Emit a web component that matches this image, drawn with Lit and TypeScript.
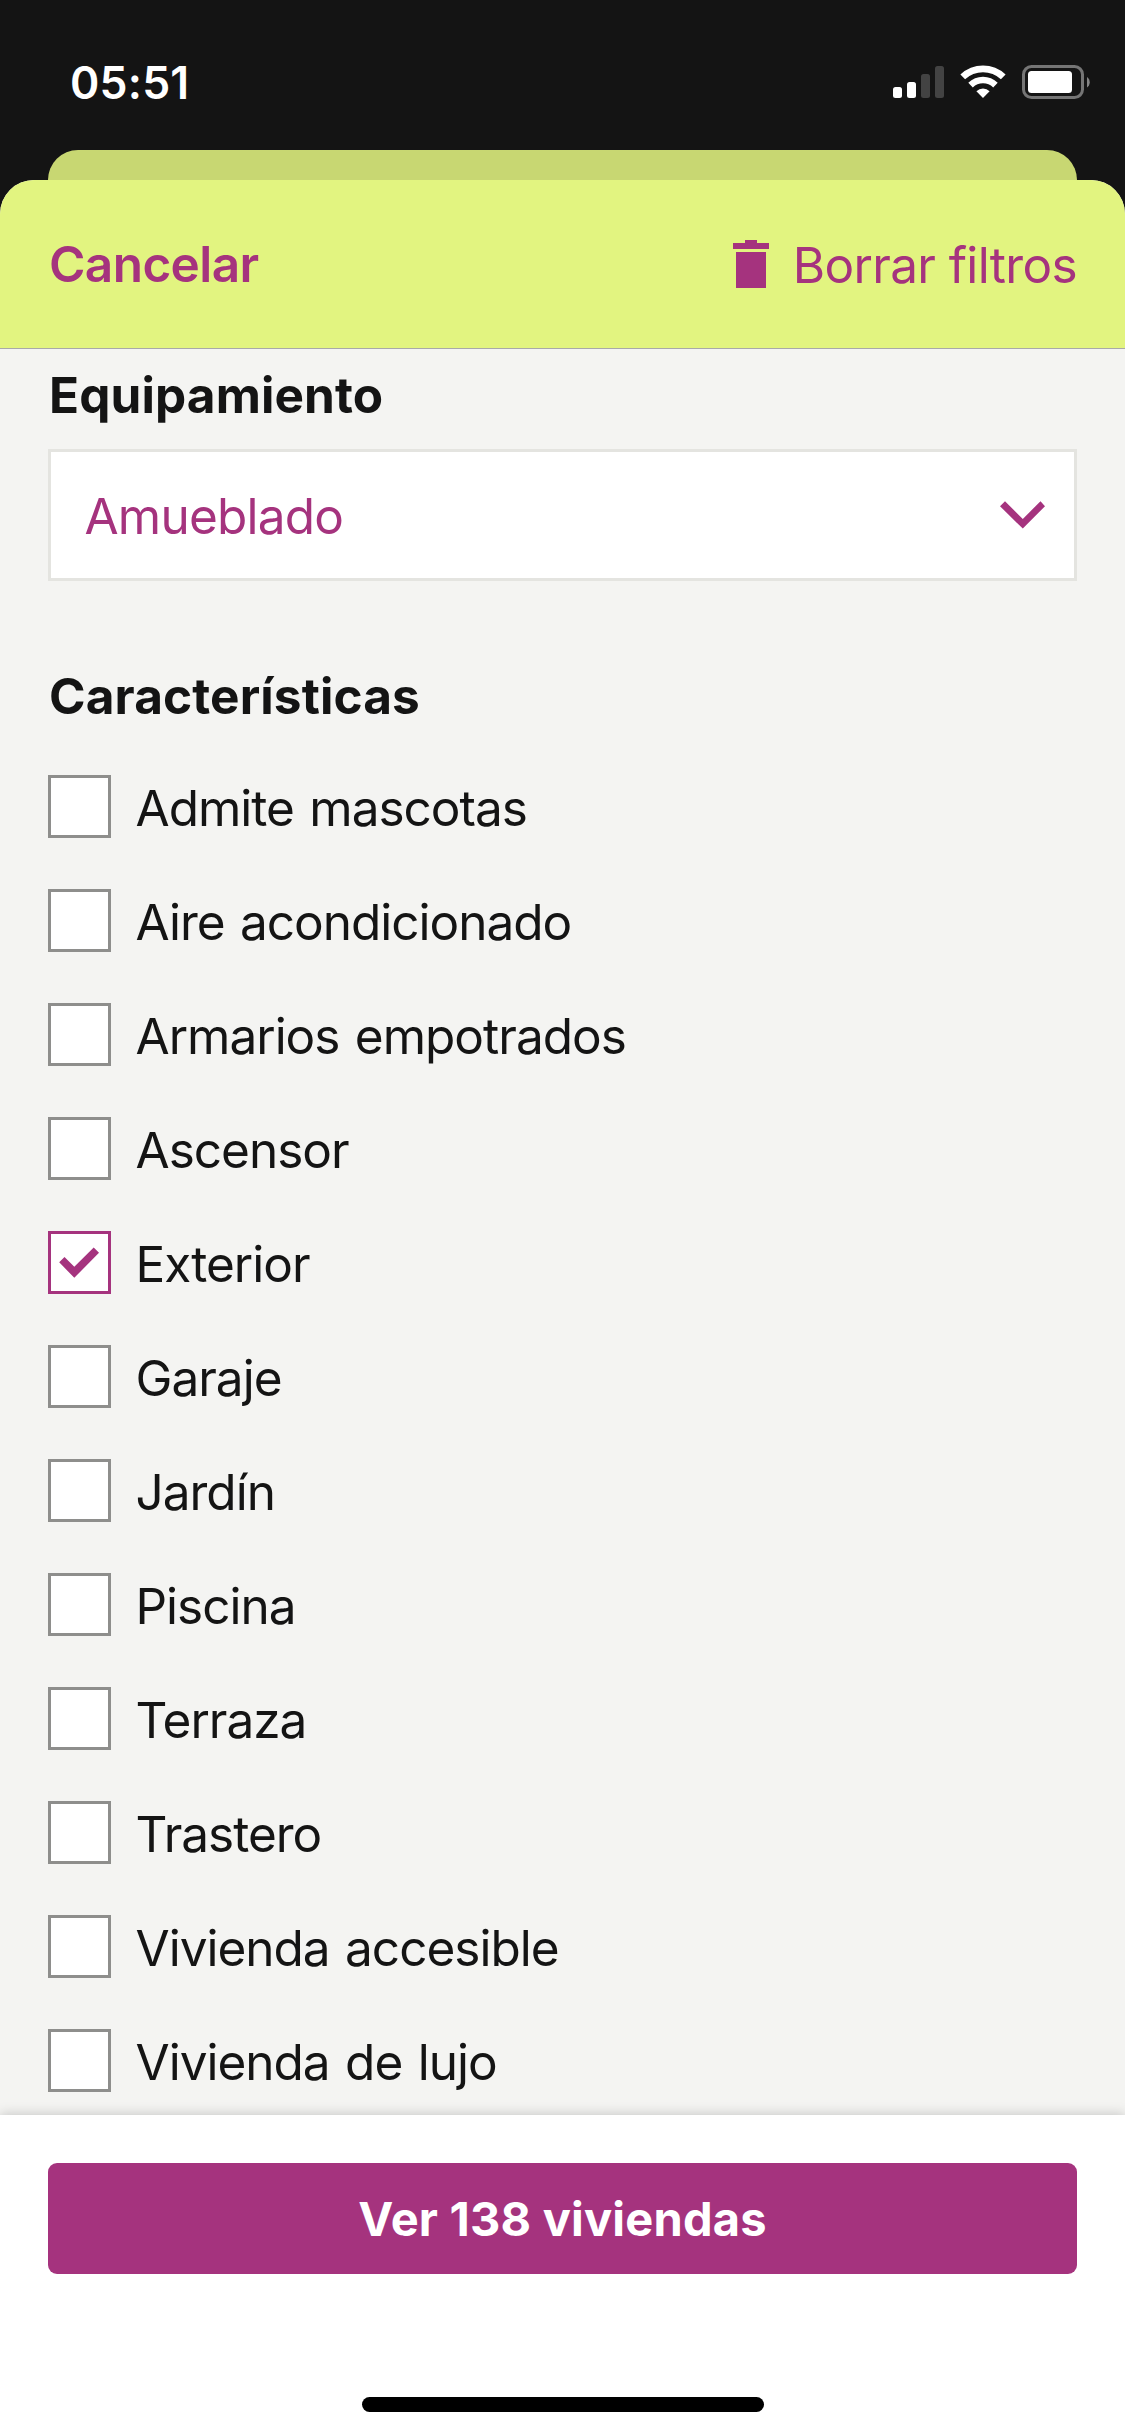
import { LitElement, html, svg, css, nothing } from "lit";
import { customElement, property, state } from "lit/decorators.js";

interface Feature {
  label: string;
  checked: boolean;
}

@customElement("status-bar")
export class StatusBar extends LitElement {
  static styles = css`
    :host {
      display: flex;
      justify-content: space-between;
      align-items: center;
      box-sizing: border-box;
      height: 150px;
      padding: 14px 33px 0 70px;
      color: #fff;
    }
    .time {
      font-size: 44.5px;
      font-weight: 600;
      line-height: 60px;
      letter-spacing: 0.2px;
      padding-top: 1px;
    }
    .icons {
      display: block;
      width: 200px;
      height: 34px;
    }
  `;

  render() {
    return html`
      <span class="time">05:51</span>
      <svg class="icons" viewBox="0 0 200 34" fill="#fff">
        <rect x="1" y="22" width="9" height="11" rx="2.5" />
        <rect x="15" y="17" width="9" height="16" rx="2.5" />
        <rect x="29" y="9" width="9" height="24" rx="2.5" fill="#434343" />
        <rect x="43" y="1" width="9" height="32" rx="2.5" fill="#434343" />
        <path d="M68.4 9.6A32.6 32.6 0 0 1 113.6 9.6L108.9 14.3A26 26 0 0 0 73.1 14.3Z" />
        <path d="M76.3 17.7A21 21 0 0 1 105.7 17.7L101.2 22.4A14.8 14.8 0 0 0 80.8 22.4Z" />
        <path d="M84.4 26.3A9.4 9.4 0 0 1 97.6 26.3L91 33Z" />
        <rect x="131.5" y="1.5" width="59" height="31" rx="8" fill="none" stroke="#757575" stroke-width="3" />
        <rect x="136" y="6" width="44" height="22" rx="3.5" />
        <path d="M195 12A6.4 6.4 0 0 1 195 22.5Z" fill="#858585" />
      </svg>
    `;
  }
}

@customElement("feature-option")
export class FeatureOption extends LitElement {
  @property() label = "";
  @property({ type: Boolean, reflect: true }) checked = false;

  static styles = css`
    :host {
      display: flex;
      align-items: center;
      gap: 24.5px;
      height: 63px;
      cursor: pointer;
    }
    .box {
      box-sizing: border-box;
      width: 63px;
      height: 63px;
      border: 3px solid #8e8e8c;
      background: #fff;
    }
    :host([checked]) .box {
      border-color: #a5337e;
    }
    .mark {
      display: block;
      width: 57px;
      height: 57px;
    }
    .label {
      padding-top: 3px;
      line-height: 60px;
      letter-spacing: -1px;
      word-spacing: 2.5px;
      white-space: nowrap;
    }
  `;

  render() {
    return html`
      <span class="box">
        ${this.checked
          ? html`<svg class="mark" viewBox="0 0 57 57">
              ${svg`<path fill="#a5337e" d="M8.2 28.3L13.5 23L23.3 32.8L42.7 13.5L48 18.8L23.3 43.8Z" />`}
            </svg>`
          : nothing}
      </span>
      <span class="label">${this.label}</span>
    `;
  }
}

@customElement("app-root")
export class AppRoot extends LitElement {
  @state() private features: Feature[] = [
    { label: "Admite mascotas", checked: false },
    { label: "Aire acondicionado", checked: false },
    { label: "Armarios empotrados", checked: false },
    { label: "Ascensor", checked: false },
    { label: "Exterior", checked: true },
    { label: "Garaje", checked: false },
    { label: "Jardín", checked: false },
    { label: "Piscina", checked: false },
    { label: "Terraza", checked: false },
    { label: "Trastero", checked: false },
    { label: "Vivienda accesible", checked: false },
    { label: "Vivienda de lujo", checked: false },
  ];

  static styles = css`
    :host {
      display: flex;
      flex-direction: column;
      width: 1125px;
      height: 2436px;
      overflow: hidden;
      background: #141414;
      color: #141414;
      font-family: Inter, "Liberation Sans", sans-serif;
      font-size: 49.5px;
    }
    .back-card {
      height: 30px;
      margin: 0 48px;
      border-radius: 30px 30px 0 0;
      background: #c8d772;
    }
    .sheet {
      flex: 1;
      display: flex;
      flex-direction: column;
      min-height: 0;
      border-radius: 34px 34px 0 0;
      overflow: hidden;
      background: #f4f4f2;
    }
    .header {
      display: flex;
      justify-content: space-between;
      align-items: center;
      height: 168px;
      padding: 0 48px 0 49px;
      border-bottom: 1px solid #a9a9a9;
      background: #e2f480;
      color: #a5337e;
      line-height: 60px;
    }
    .cancel {
      font-weight: 600;
      letter-spacing: -0.6px;
    }
    .clear {
      display: flex;
      align-items: center;
      gap: 24px;
    }
    .clear-label {
      padding-top: 2px;
      letter-spacing: -0.64px;
    }
    .trash {
      display: block;
      width: 36px;
      height: 48px;
    }
    .content {
      flex: 1;
      display: flex;
      flex-direction: column;
      padding: 16px 48px 0;
      min-height: 0;
    }
    .title {
      margin: 0;
      padding-left: 1px;
      font-size: inherit;
      font-weight: 700;
      line-height: 60px;
      letter-spacing: 0.12px;
    }
    .select {
      display: flex;
      justify-content: space-between;
      align-items: center;
      box-sizing: border-box;
      height: 132px;
      margin: 24px 0 85px;
      padding: 0 29px 0 33.5px;
      border: 3px solid #e4e4e0;
      background: #fff;
      color: #a5337e;
    }
    .value {
      padding-top: 2px;
      line-height: 60px;
      letter-spacing: -0.78px;
    }
    .chevron {
      display: block;
      width: 45px;
      height: 28px;
    }
    .options {
      display: flex;
      flex-direction: column;
      gap: 51px;
      margin-top: 49px;
    }
    .footer {
      display: flex;
      flex-direction: column;
      align-items: center;
      justify-content: space-between;
      box-sizing: border-box;
      height: 321px;
      padding: 48px 48px 24px;
      background: #fff;
      box-shadow: 0 0 12px rgba(0, 0, 0, 0.22);
    }
    .submit {
      width: 100%;
      height: 111px;
      padding: 1px 0 0;
      border: 0;
      border-radius: 9px;
      background: #a5337e;
      color: #fff;
      font: 700 47px / 60px Inter, "Liberation Sans", sans-serif;
      letter-spacing: 0.2px;
    }
    .home-indicator {
      width: 402px;
      height: 15px;
      border-radius: 8px;
      background: #000;
    }
  `;

  private toggle(index: number) {
    this.features = this.features.map((f, i) =>
      i === index ? { ...f, checked: !f.checked } : f,
    );
  }

  render() {
    return html`
      <status-bar></status-bar>
      <div class="back-card"></div>
      <div class="sheet">
        <div class="header">
          <span class="cancel">Cancelar</span>
          <span class="clear">
            <svg class="trash" viewBox="0 0 36 48" fill="#a5337e">
              <path d="M12 0H24V3H36V9H0V3H12ZM3 12H33V48H3Z" />
            </svg>
            <span class="clear-label">Borrar filtros</span>
          </span>
        </div>
        <div class="content">
          <h2 class="title">Equipamiento</h2>
          <div class="select">
            <span class="value">Amueblado</span>
            <svg class="chevron" viewBox="0 0 45 28">
              <path fill="#a5337e" d="M0 5.2L5 0.2L22.8 18L40.5 0.2L45 5.2L22.8 27.6Z" />
            </svg>
          </div>
          <h2 class="title">Características</h2>
          <div class="options">
            ${this.features.map(
              (f, i) => html`<feature-option
                .label=${f.label}
                .checked=${f.checked}
                @click=${() => this.toggle(i)}
              ></feature-option>`,
            )}
          </div>
        </div>
        <div class="footer">
          <button class="submit">Ver 138 viviendas</button>
          <div class="home-indicator"></div>
        </div>
      </div>
    `;
  }
}
